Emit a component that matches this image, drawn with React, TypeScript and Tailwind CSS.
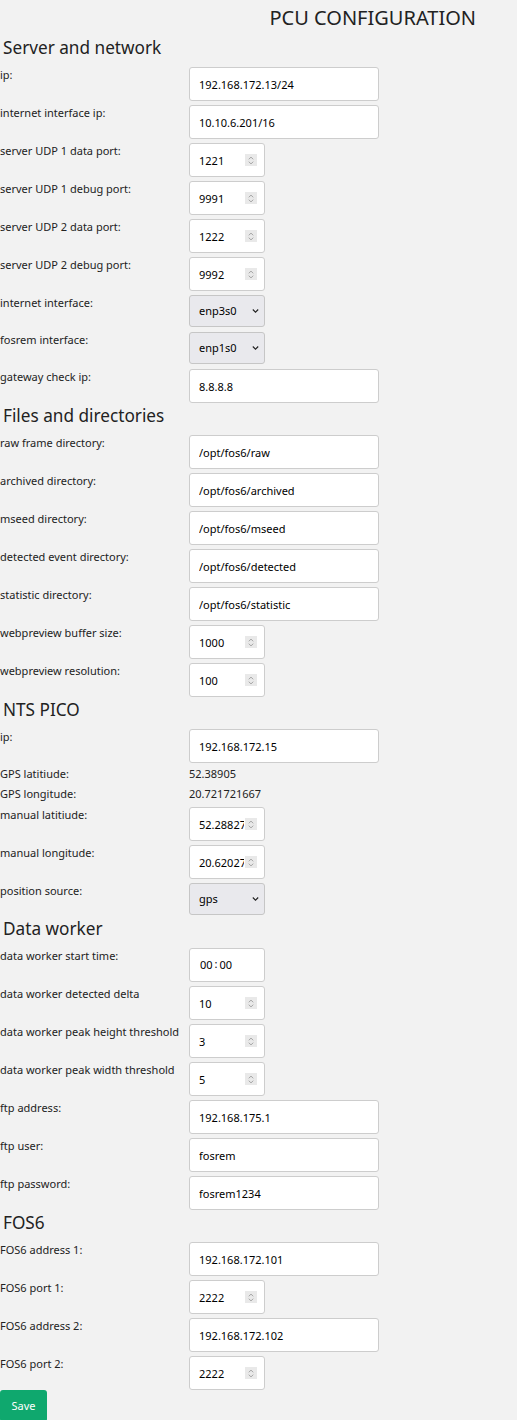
import React from "react";

type Row = {
  label: string;
  kind: "text" | "number" | "select" | "time" | "static";
  value: string;
};

type Section = { title: string; rows: Row[] };

const sections: Section[] = [
  {
    title: "Server and network",
    rows: [
      { label: "ip:", kind: "text", value: "192.168.172.13/24" },
      { label: "internet interface ip:", kind: "text", value: "10.10.6.201/16" },
      { label: "server UDP 1 data port:", kind: "number", value: "1221" },
      { label: "server UDP 1 debug port:", kind: "number", value: "9991" },
      { label: "server UDP 2 data port:", kind: "number", value: "1222" },
      { label: "server UDP 2 debug port:", kind: "number", value: "9992" },
      { label: "internet interface:", kind: "select", value: "enp3s0" },
      { label: "fosrem interface:", kind: "select", value: "enp1s0" },
      { label: "gateway check ip:", kind: "text", value: "8.8.8.8" },
    ],
  },
  {
    title: "Files and directories",
    rows: [
      { label: "raw frame directory:", kind: "text", value: "/opt/fos6/raw" },
      { label: "archived directory:", kind: "text", value: "/opt/fos6/archived" },
      { label: "mseed directory:", kind: "text", value: "/opt/fos6/mseed" },
      { label: "detected event directory:", kind: "text", value: "/opt/fos6/detected" },
      { label: "statistic directory:", kind: "text", value: "/opt/fos6/statistic" },
      { label: "webpreview buffer size:", kind: "number", value: "1000" },
      { label: "webpreview resolution:", kind: "number", value: "100" },
    ],
  },
  {
    title: "NTS PICO",
    rows: [
      { label: "ip:", kind: "text", value: "192.168.172.15" },
      { label: "GPS latitiude:", kind: "static", value: "52.38905" },
      { label: "GPS longitude:", kind: "static", value: "20.721721667" },
      { label: "manual latitiude:", kind: "number", value: "52.28827" },
      { label: "manual longitude:", kind: "number", value: "20.62027" },
      { label: "position source:", kind: "select", value: "gps" },
    ],
  },
  {
    title: "Data worker",
    rows: [
      { label: "data worker start time:", kind: "time", value: "00:00" },
      { label: "data worker detected delta", kind: "number", value: "10" },
      { label: "data worker peak height threshold", kind: "number", value: "3" },
      { label: "data worker peak width threshold", kind: "number", value: "5" },
      { label: "ftp address:", kind: "text", value: "192.168.175.1" },
      { label: "ftp user:", kind: "text", value: "fosrem" },
      { label: "ftp password:", kind: "text", value: "fosrem1234" },
    ],
  },
  {
    title: "FOS6",
    rows: [
      { label: "FOS6 address 1:", kind: "text", value: "192.168.172.101" },
      { label: "FOS6 port 1:", kind: "number", value: "2222" },
      { label: "FOS6 address 2:", kind: "text", value: "192.168.172.102" },
      { label: "FOS6 port 2:", kind: "number", value: "2222" },
    ],
  },
];

const FONT = "font-['Segoe_UI','Noto_Sans',sans-serif]";

function Spinner() {
  return (
    <span className="pointer-events-none absolute right-[8px] top-1/2 flex h-[12px] w-[12px] -translate-y-1/2 items-center justify-center bg-[#e9e9e9]">
      <svg width="6" height="9" viewBox="0 0 6 9" fill="none" stroke="#9a9a9a" strokeWidth="0.9">
        <path d="M0.8 3.3 L3 1.1 L5.2 3.3" />
        <path d="M0.8 5.7 L3 7.9 L5.2 5.7" />
      </svg>
    </span>
  );
}

function Field({ row }: { row: Row }) {
  const base =
    "h-[34px] rounded-[3px] border border-[#cdcdcd] bg-white pl-[9px] text-[11px] text-black outline-none " + FONT;
  if (row.kind === "text") {
    return <input readOnly defaultValue={row.value} className={base + " w-[190px]"} />;
  }
  if (row.kind === "number") {
    return (
      <div className="relative w-[76px]">
        <input readOnly defaultValue={row.value} className={base + " w-[76px] pr-[20px]"} />
        <Spinner />
      </div>
    );
  }
  if (row.kind === "time") {
    return (
      <div className={base + " flex w-[76px] items-center pl-[10px]"}>
        <span>00</span>
        <span className="mx-[2px] -translate-y-[1px]">:</span>
        <span>00</span>
      </div>
    );
  }
  if (row.kind === "select") {
    return (
      <div className="relative w-[76px]">
        <select
          defaultValue={row.value}
          className={
            "h-[32px] w-[76px] appearance-none rounded-[3px] border border-[#c6c6c6] bg-[#e9e9ed] pl-[9px] text-[11px] text-black outline-none " +
            FONT
          }
        >
          <option>{row.value}</option>
        </select>
        <svg
          className="pointer-events-none absolute right-[6px] top-1/2 -translate-y-1/2"
          width="7"
          height="5"
          viewBox="0 0 7 5"
          fill="none"
          stroke="#222"
          strokeWidth="1.1"
        >
          <path d="M0.8 1 L3.5 3.7 L6.2 1" />
        </svg>
      </div>
    );
  }
  return <span className="text-[11px] leading-[14px] text-[#222]">{row.value}</span>;
}

function FormRow({ row, last }: { row: Row; last: boolean }) {
  if (row.kind === "static") {
    return (
      <div className="grid h-[20px] grid-cols-[189px_1fr] items-start">
        <span className="text-[11px] leading-[14px] text-[#222]">{row.label}</span>
        <Field row={row} />
      </div>
    );
  }
  const h = row.kind === "select" ? "h-[37px]" : last ? "h-[34px]" : "h-[38px]";
  return (
    <div className={"grid grid-cols-[189px_1fr] items-start " + h}>
      <span className="text-[11px] leading-[16px] text-[#222]">{row.label}</span>
      <Field row={row} />
    </div>
  );
}

export default function App() {
  return (
    <div className={"min-h-[1420px] w-full bg-[#f2f2f2] text-[#222] " + FONT}>
      <header className="flex h-[39px] justify-end pr-[41px]">
        <h1 className="pt-[5px] text-[20px] leading-[26px] font-normal text-[#222]">
          PCU CONFIGURATION
        </h1>
      </header>
      {sections.map((s, si) => (
        <section key={s.title}>
          <h2 className="h-[28px] pl-[3px] text-[17.2px] leading-[18px] font-normal text-[#222]">
            {s.title}
          </h2>
          <div className="flex flex-col">
            {s.rows.map((r, i) => (
              <FormRow
                key={r.label}
                row={r}
                last={si === sections.length - 1 && i === s.rows.length - 1}
              />
            ))}
          </div>
        </section>
      ))}
      <button className="mt-[0px] h-[32px] w-[47px] rounded-[3px] bg-[#0fa86e] text-[11px] text-white">
        Save
      </button>
    </div>
  );
}
